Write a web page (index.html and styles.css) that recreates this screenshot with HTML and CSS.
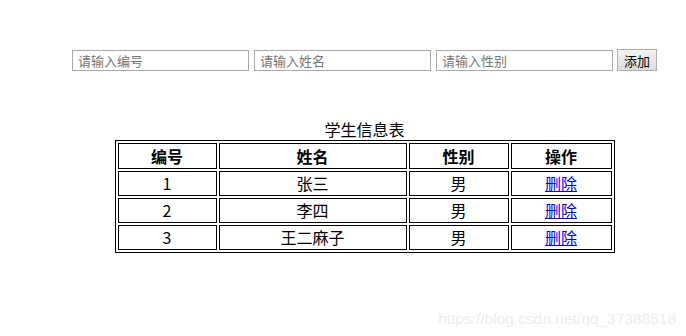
FILE: index.html
```html
<!DOCTYPE html>
<html lang="zh-CN">
<head>
    <meta charset="UTF-8">
    <title>学生信息表</title>
    <link rel="stylesheet" href="styles.css">
</head>
<body>

    <div class="page">
        <div class="form">
            <input type="text" class="input-field" placeholder="请输入编号">
            <input type="text" class="input-field" placeholder="请输入姓名">
            <input type="text" class="input-field" placeholder="请输入性别">
            <button class="btn">添加</button>
        </div>

        <table class="students">
            <caption>学生信息表</caption>
            <tr>
                <th class="col-id">编号</th>
                <th class="col-name">姓名</th>
                <th class="col-sex">性别</th>
                <th class="col-op">操作</th>
            </tr>
            <tr>
                <td>1</td>
                <td>张三</td>
                <td>男</td>
                <td><a href="#">删除</a></td>
            </tr>
            <tr>
                <td>2</td>
                <td>李四</td>
                <td>男</td>
                <td><a href="#">删除</a></td>
            </tr>
            <tr>
                <td>3</td>
                <td>王二麻子</td>
                <td>男</td>
                <td><a href="#">删除</a></td>
            </tr>
        </table>
    </div>

    <div class="watermark">https://blog.csdn.net/qq_37388518</div>

</body>
</html>
```

FILE: styles.css
```css
body {
    margin: 0;
    font-family: 'Noto Sans CJK SC', 'Liberation Sans', sans-serif;
    background: white;
    color: black;
}
.page {
    padding-left: 43px;
}
.form {
    display: flex;
    justify-content: center;
    align-items: center;
    gap: 5px;
    margin-top: 49px;
    height: 22px;
}
.input-field {
    box-sizing: border-box;
    width: 177px;
    height: 21px;
    margin: 0;
    padding: 0 5px;
    border: 1px solid #a9a9a9;
    font-family: 'Noto Sans CJK SC', sans-serif;
    font-size: 13px;
    outline: none;
}
.input-field::placeholder {
    color: #757575;
}
.btn {
    box-sizing: border-box;
    width: 40px;
    height: 22px;
    margin-left: -1px;
    padding: 0;
    border: 1px solid #adadad;
    background: linear-gradient(#f2f2f2, #dddddd);
    font-family: 'Noto Sans CJK SC', sans-serif;
    font-size: 13px;
    color: black;
}
.students {
    width: 500px;
    margin: 47px auto 0;
    border: 1px solid black;
    border-spacing: 2px;
    table-layout: fixed;
    font-size: 16px;
}
.students caption {
    line-height: 22px;
}
.students th, .students td {
    box-sizing: border-box;
    border: 1px solid black;
    padding: 1px;
    height: 25px;
    line-height: 21px;
    text-align: center;
}
.students th {
    height: 26px;
    font-weight: bold;
}
.col-id { width: 99px; }
.col-name { width: 188px; }
.col-sex { width: 100px; }
.col-op { width: 101px; }
.students a {
    color: #0000ee;
}
.watermark {
    position: absolute;
    right: 10px;
    bottom: 8px;
    font-family: 'Liberation Sans', sans-serif;
    font-size: 15.5px;
    color: #ededed;
}
```
